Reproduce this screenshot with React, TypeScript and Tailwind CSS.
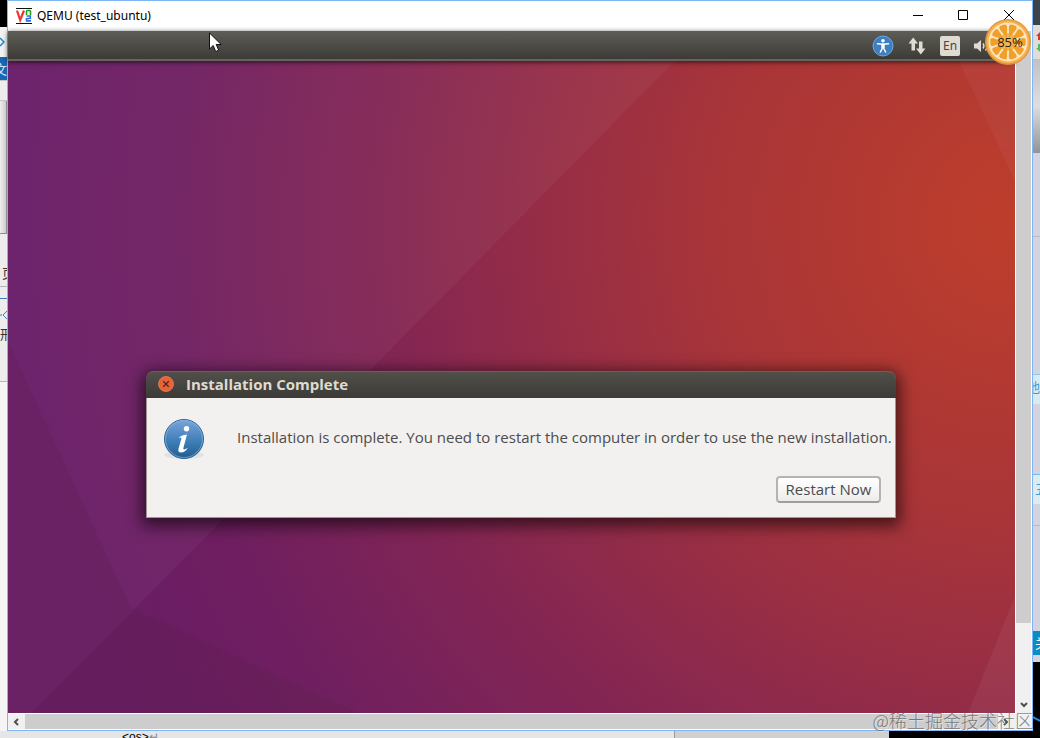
import type { ReactNode } from 'react';

const SLICES = [18, 54, 90, 126, 162, 198, 234, 270, 306, 342];

function VncLogo() {
  return (
    <svg className="h-4 w-4 shrink-0" viewBox="0 0 16 16" fill="none">
      <path d="M0 .5h16M0 15.5h16" stroke="#111" />
      <path d="M1 2.500 4.200 12 8 2.500" stroke="#f03434" strokeWidth="2.200" />
      <path d="M10.500 7V3.500q0-1 1-1h2q1 0 1 1V7" stroke="#1aa31a" strokeWidth="1.600" />
      <path d="M10.500 8h3.800v2.200l-3.800.6v2.100h4.500" stroke="#2d6fe8" strokeWidth="1.600" />
    </svg>
  );
}

function TitleButton({ label, children }: { label: string; children: ReactNode }) {
  return (
    <button aria-label={label} className="flex h-full w-[46px] items-center justify-center hover:bg-gray-200">
      <svg className="h-3 w-3" viewBox="-1 0 12 12" fill="none" stroke="#000">
        {children}
      </svg>
    </button>
  );
}

function TitleBar() {
  return (
    <header className="flex h-[30px] shrink-0 items-center bg-white pl-2">
      <VncLogo />
      <h1 className="flex-1 pl-[5px] font-['Noto_Sans',sans-serif] text-[12px] leading-4 text-black">
        QEMU (test_ubuntu)
      </h1>
      <TitleButton label="Minimize">
        <path d="M1 5.500h10" />
      </TitleButton>
      <TitleButton label="Maximize">
        <path d="M.5 .5h9v9h-9z" />
      </TitleButton>
      <TitleButton label="Close">
        <path d="m0 0 10 10m0-10L0 10" />
      </TitleButton>
    </header>
  );
}

function Panel() {
  return (
    <div className="relative z-10 flex h-[30px] shrink-0 items-center justify-end gap-[14px] border-b-2 border-[#66645c] bg-linear-to-b from-[#5e5d56] to-[#3c3b37] pt-[2px] pr-[19px] shadow-[0_1px_5px_rgba(0,0,0,0.7)]">
      <button aria-label="Accessibility">
        <svg className="h-[22px] w-[22px]" viewBox="0 0 22 22">
          <circle cx="11" cy="11" r="10" fill="#3e7fc0" stroke="#6da7dc" />
          <circle cx="11" cy="5.700" r="1.800" fill="#fff" />
          <path
            d="M5.500 8.800 11 9.300l5.500-.5M11 9v4M11 12l-2.600 5M11 12l2.600 5"
            fill="none"
            stroke="#fff"
            strokeWidth="1.500"
            strokeLinecap="round"
          />
          <path d="M9.300 8.800h3.400v4.200H9.300z" fill="#fff" />
        </svg>
      </button>
      <button aria-label="Network">
        <svg className="h-5 w-[18px]" viewBox="0 0 18 20" fill="#dfdbd2">
          <path d="M5.200 1.500 10 7.500H7v7H3.500v-7H.5z" />
          <path d="M12.800 18.500 8 12.500h3v-7h3.500v7h3z" />
        </svg>
      </button>
      <button className="h-5 w-5 rounded-xs bg-[#dfdbd2] font-['Noto_Sans',sans-serif] text-[12px] leading-5 text-[#45443f]">
        En
      </button>
      <button aria-label="Volume">
        <svg className="h-5 w-[22px]" viewBox="0 0 22 20" fill="none" stroke="#dfdbd2" strokeWidth="1.500">
          <path d="M0 7.500h3L7 4v12l-4-3.500H0z" fill="#dfdbd2" stroke="none" />
          <path d="M9 7.500q1.800 2.500 0 5M11.500 5.500q3.400 4.500 0 9M14 4q4.600 6 0 12" />
        </svg>
      </button>
    </div>
  );
}

function Wallpaper() {
  return (
    <svg className="absolute inset-0 h-full w-full" viewBox="0 0 1007 652" preserveAspectRatio="none">
      <defs>
        <radialGradient id="sunset" gradientUnits="userSpaceOnUse" cx="1007" cy="160" r="990">
          <stop offset="0" stopColor="#be3e2b" />
          <stop offset=".3" stopColor="#a93538" />
          <stop offset=".5" stopColor="#932c48" />
          <stop offset=".65" stopColor="#822554" />
          <stop offset=".85" stopColor="#6f1f60" />
          <stop offset="1" stopColor="#691c66" />
        </radialGradient>
      </defs>
      <path d="M0 0h1007v652H0z" fill="url(#sunset)" />
      <path d="M0 0h667L24 652H0z" fill="#fff" fillOpacity=".04" />
      <path d="M0 280 123 547 24 652H0z" fill="#5c1f45" fillOpacity=".2" />
      <path d="M123 547 350 652H24z" fill="#5a1e44" fillOpacity=".25" />
      <path d="M951 0h56v120z" fill="#fff" fillOpacity=".04" />
      <path d="M1007 535v117h-47z" fill="#fff" fillOpacity=".05" />
    </svg>
  );
}

function InfoIcon() {
  return (
    <svg className="h-11 w-11 shrink-0" viewBox="0 0 44 44">
      <defs>
        <linearGradient id="info" x1="0" y1="0" x2="0" y2="1">
          <stop offset="0" stopColor="#7ba4dc" />
          <stop offset=".55" stopColor="#3f7fb8" />
          <stop offset="1" stopColor="#215d8c" />
        </linearGradient>
      </defs>
      <ellipse cx="22" cy="37" rx="20" ry="4" fill="#000" fillOpacity=".06" />
      <circle cx="22" cy="21" r="19.500" fill="url(#info)" stroke="#2a6496" />
      <circle cx="22" cy="21" r="18.500" fill="none" stroke="#a5c6ea" strokeOpacity=".5" />
      <circle cx="24.500" cy="10.800" r="2.700" fill="#fff" />
      <path d="m16.500 19.500q4.500-3 8.500-3l-3.600 13.500q-.4 2 1.400 1.300l3-1.300q-3 4.500-6.800 4.500-3.500 0-2.500-3.700l3-10.500q-.7-1-3-.8z" fill="#fff" />
    </svg>
  );
}

function InstallDialog() {
  return (
    <section
      role="dialog"
      aria-labelledby="dialog-title"
      className="absolute top-[310px] left-[138px] w-[750px] rounded-t-lg font-['Open_Sans',sans-serif] shadow-[0_4px_16px_4px_rgba(0,0,0,0.6)]"
    >
      <div className="flex h-[27px] items-center gap-3 rounded-t-lg border-t border-[#66645c] bg-linear-to-b from-[#504f48] to-[#3c3b37] pb-[2px] pl-3">
        <button aria-label="Close dialog">
          <svg className="h-4 w-4" viewBox="0 0 16 16">
            <circle cx="8" cy="8" r="7.500" fill="#ea6137" stroke="#f58a62" strokeWidth=".7" />
            <path d="m5.300 5.300 5.400 5.400m0-5.400-5.400 5.400" stroke="#4b2a1c" strokeWidth="1.300" />
          </svg>
        </button>
        <h2 id="dialog-title" className="text-[15px] leading-5 font-bold text-[#dfdbd2]">
          Installation Complete
        </h2>
      </div>
      <div className="border border-t-0 border-[#9c9791] bg-[#f2f1f0] px-[14px] pt-5 pb-[14px] text-[15px] leading-5 text-[#4c4c4c]">
        <div className="flex items-start gap-[31px] pl-px">
          <InfoIcon />
          <p className="pt-[9px] whitespace-nowrap">
            Installation is complete. You need to restart the computer in order to use the new installation.
          </p>
        </div>
        <div className="flex justify-end pt-[14px]">
          <button className="h-[27px] w-[105px] rounded border-2 border-[#b5b3b0] border-b-[#a09e9b] bg-linear-to-b from-white to-[#ececeb] pb-[2px] leading-5 whitespace-nowrap">
            Restart Now
          </button>
        </div>
      </div>
    </section>
  );
}

function ScrollArrow({ label, d }: { label: string; d: string }) {
  return (
    <button aria-label={label} className="flex h-4 w-4 shrink-0 items-center justify-center">
      <svg className="h-2 w-2" viewBox="0 0 8 8" fill="none" stroke="#505050" strokeWidth="2">
        <path d={d} />
      </svg>
    </button>
  );
}

function LeftBackdrop() {
  return (
    <div className="flex w-[7px] shrink-0 flex-col overflow-hidden bg-[#ededed] font-['Noto_Sans_CJK_SC',sans-serif] text-[13px] leading-4 text-[#333]">
      <div className="h-[27px] shrink-0 bg-black" />
      <div className="flex h-[30px] shrink-0 items-center bg-[#f2f2f2]">
        <svg className="h-3 w-[5px]" viewBox="0 0 5 12" fill="none" stroke="#1a86d0" strokeWidth="1.500">
          <path d="m0 2 4 4-4 4" />
        </svg>
      </div>
      <div className="flex h-[23px] shrink-0 justify-end bg-[#1768b3] pt-1 text-[#d5e6f5]">文</div>
      <div className="h-[21px] shrink-0 border-y border-[#c5c5c5]" />
      <div className="h-[133px] shrink-0 border-r border-b border-[#8d8d8d] bg-linear-to-r from-[#eee] to-[#ccc]" />
      <div className="h-[53px] shrink-0 border-b border-[#b5b5b5] pt-[31px] pl-[2px]">页</div>
      <div className="h-3 shrink-0 border-b border-[#3f7cb8]" />
      <div className="h-[27px] shrink-0 pt-2 text-[#3f7cb8]">
        <svg className="h-4 w-[7px]" viewBox="0 0 7 16" fill="none" stroke="#3f7cb8">
          <path d="M0 8h2M7 4 3 8l4 4" />
        </svg>
      </div>
      <div className="h-14 shrink-0 border-b border-[#b5b5b5]">形</div>
      <div className="flex-1 bg-[#f5f5f5]" />
    </div>
  );
}

function RightBackdrop() {
  return (
    <div className="flex w-[7px] shrink-0 flex-col overflow-hidden bg-[#d3d4df] font-['Noto_Sans_CJK_SC',sans-serif] text-[13px] leading-4 text-[#3c9bd0]">
      <div className="h-[25px] shrink-0 bg-[#3b444b]" />
      <div className="h-[34px] shrink-0 bg-[#deddd8]">
        <svg className="h-[34px] w-[7px]" viewBox="0 0 7 34">
          <path d="M7 7v8H5v-4H3zM3 11l4-4v4z" fill="#e03030" />
          <path d="M7 27v-8H5v4H3zM3 23l4 4v-4z" fill="#5cb85c" />
        </svg>
      </div>
      <div className="h-[94px] shrink-0 bg-linear-to-b from-[#bfc1c5] via-[#dedee0] to-[#909498]" />
      <div className="h-[84px] shrink-0 border-b border-[#b9bac4]" />
      <div className="h-[137px] shrink-0" />
      <div className="h-[30px] shrink-0 border-t border-[#86cdee] bg-[#d8ebf2] pt-1">
        <span className="flex w-[7px] justify-end">他</span>
      </div>
      <div className="h-[70px] shrink-0" />
      <div className="h-[30px] shrink-0 border-t border-[#70bfe8] bg-[#dcedf2] pt-[6px] pl-[2px]">五</div>
      <div className="h-[22px] shrink-0 border-b border-[#b9bac4]" />
      <div className="h-[105px] shrink-0" />
      <div className="h-6 shrink-0 bg-[#0a8cc4] pt-1 pl-[2px] text-white">关</div>
      <div className="h-[7px] shrink-0" />
      <div className="flex-1 bg-black">
        <svg className="mt-[54px] h-2 w-[7px]" viewBox="0 0 7 8">
          <path d="m0 1 7 4" stroke="#2e86d8" strokeWidth="2" />
        </svg>
      </div>
    </div>
  );
}

function OrangeGauge() {
  return (
    <div className="absolute top-[18px] right-2 z-20 flex h-12 w-12 items-center justify-center">
      <svg className="absolute inset-0 h-full w-full" viewBox="0 0 48 48">
        <circle cx="24" cy="24" r="23" fill="#e0963c" fillOpacity=".95" />
        <circle cx="24" cy="24" r="21.500" fill="#f9b04a" />
        <circle cx="24" cy="24" r="19.500" fill="#fbe6bd" />
        {SLICES.map((angle) => (
          <path
            key={angle}
            d="M24 20 20.200 9.500Q19.500 7 21.300 6.500q2.700-.5 5.400 0 1.800.5 1.100 3z"
            fill="#f0a02a"
            transform={`rotate(${angle} 24 24)`}
          />
        ))}
        <circle cx="24" cy="24" r="9" fill="#f0a02a" fillOpacity=".7" />
      </svg>
      <span className="relative pl-1 font-['Open_Sans',sans-serif] text-[13px] leading-4 text-[#2e2410]">85%</span>
    </div>
  );
}

function Pointer() {
  return (
    <svg className="absolute top-8 left-[208px] z-20 h-[22px] w-[14px]" viewBox="0 0 14 22">
      <path
        d="M1.500 1v16l3.700-3.500 2.500 6 3-1.300-2.500-5.700h5z"
        fill="#fff"
        stroke="#111"
      />
    </svg>
  );
}

export default function App() {
  return (
    <div className="relative flex h-screen flex-col overflow-hidden">
      <div className="flex min-h-0 flex-1">
        <LeftBackdrop />
        <main className="flex min-w-0 flex-1 flex-col border border-[#7fb5f5] bg-white">
          <TitleBar />
          <div className="flex min-h-0 flex-1">
            <div className="flex min-w-0 flex-1 flex-col">
              <Panel />
              <div className="relative flex-1 overflow-hidden">
                <Wallpaper />
                <InstallDialog />
              </div>
            </div>
            <div className="mx-px flex w-[15px] shrink-0 flex-col items-center bg-[#f0f0f0]">
              <div className="w-full flex-1 bg-[#cdcdcd]" />
              <div className="flex h-[90px] items-end">
                <ScrollArrow label="Scroll down" d="m1 2 3 3 3-3" />
              </div>
            </div>
          </div>
          <div className="my-px flex h-[15px] shrink-0 items-center bg-[#f0f0f0]">
            <ScrollArrow label="Scroll left" d="M6 1 3 4l3 3" />
            <div className="ml-px h-full flex-1 bg-[#cdcdcd]" />
            <div className="flex w-[34px]">
              <ScrollArrow label="Scroll right" d="m2 1 3 3-3 3" />
            </div>
          </div>
        </main>
        <RightBackdrop />
      </div>
      <footer className="flex h-[7px] shrink-0 overflow-hidden bg-[#e6e6e6] font-['Liberation_Sans',sans-serif] text-[12px] leading-3 text-black">
        <div className="w-[675px] border-r border-[#999] pl-[122px]">
          &lt;os&gt;<span className="text-[#888]">↵</span>
        </div>
        <div className="flex-1 bg-[#d0d0d0]" />
        <div className="w-[151px] bg-black" />
      </footer>
      <OrangeGauge />
      <Pointer />
      <p className="absolute right-[7px] bottom-[6px] z-20 font-['Noto_Sans_CJK_SC',sans-serif] text-[18px] leading-6 font-light text-[#606060]/80 [text-shadow:1px_1px_0_rgba(255,255,255,0.4)]">
        @稀土掘金技术社区
      </p>
    </div>
  );
}
